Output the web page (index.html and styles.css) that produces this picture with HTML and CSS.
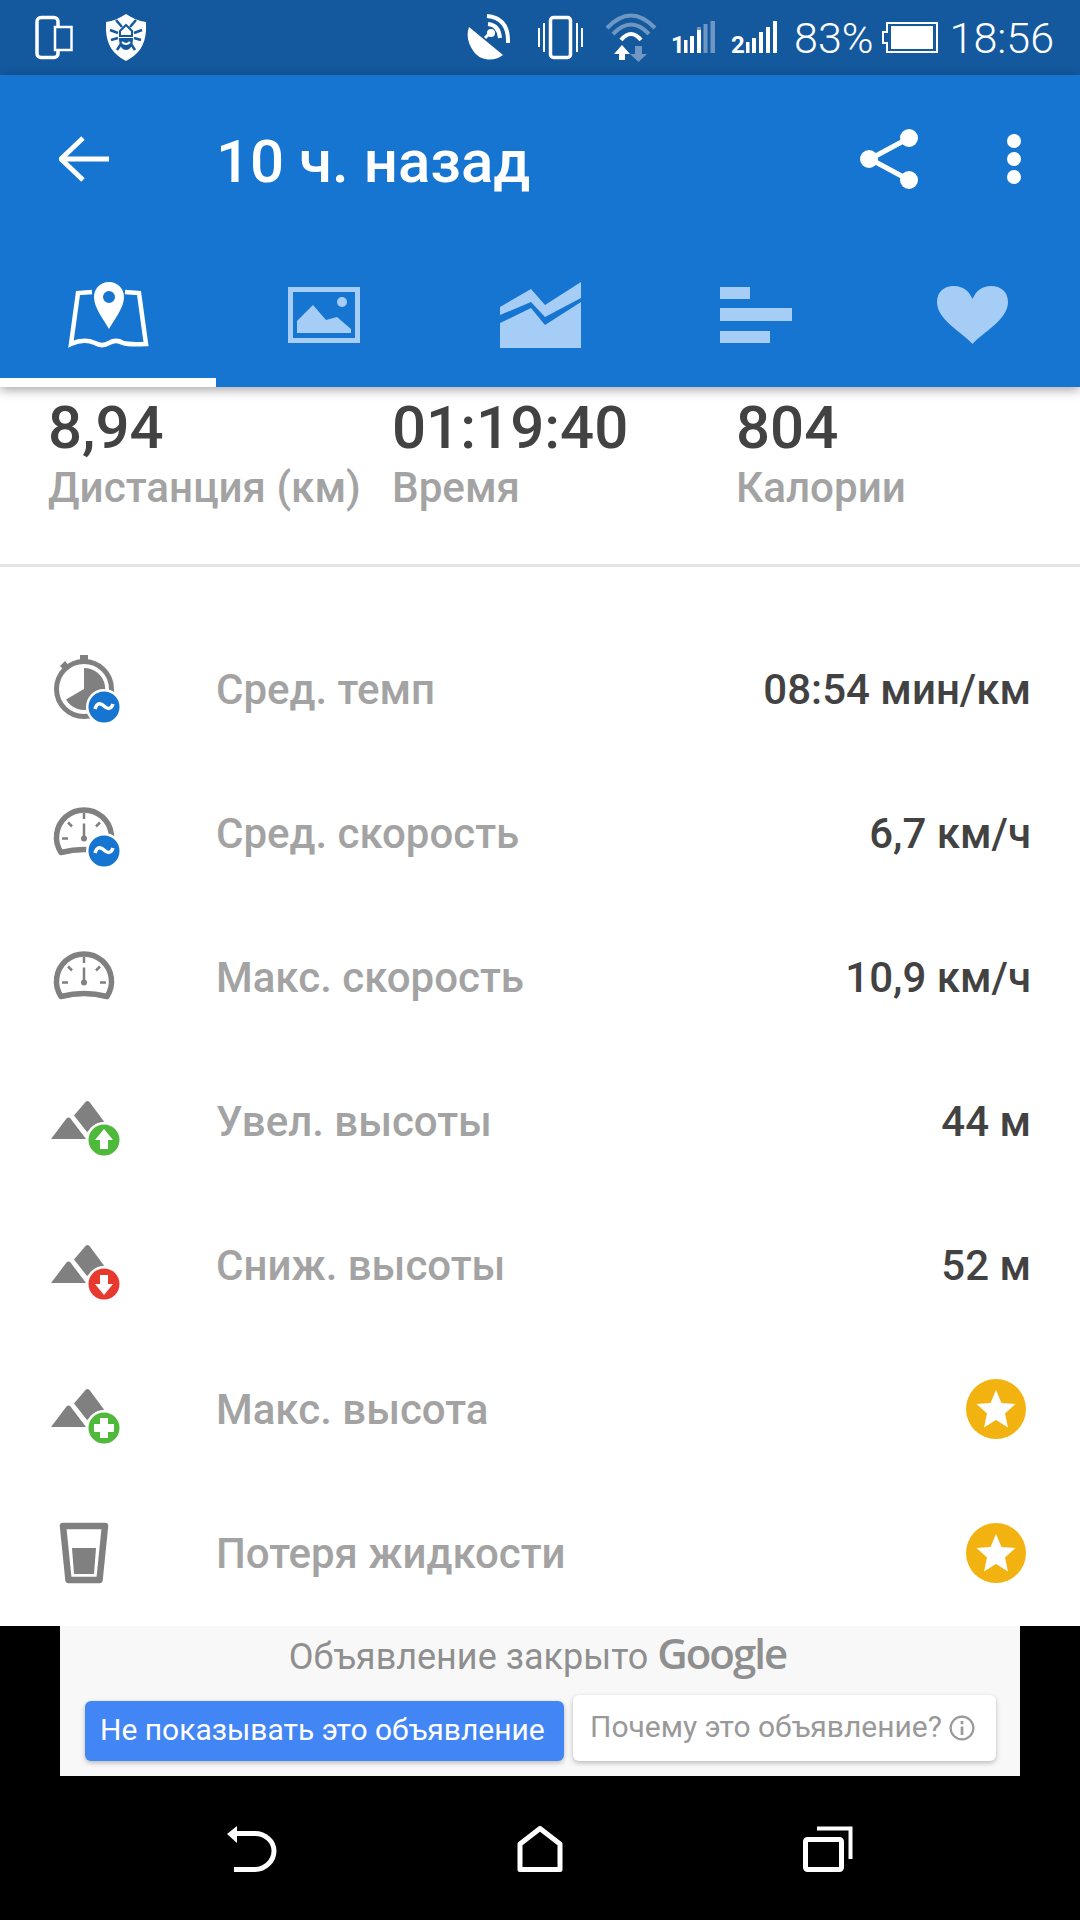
FILE: index.html
```html
<!DOCTYPE html>
<html lang="ru">
<head>
    <meta charset="UTF-8">
    <meta name="viewport" content="width=device-width, initial-scale=1.0">
    <title>10 ч. назад</title>
    <link rel="stylesheet" href="styles.css">
</head>
<body>
    <svg class="defs" aria-hidden="true">
        <symbol id="gauge" viewBox="0 0 80 80">
            <path d="M17 58.5A27.5 27.5 0 1 1 63 58.5Q40 52.5 17 58.5Z" fill="none" stroke="#808081" stroke-width="5.5" stroke-linejoin="round"/>
            <path d="M40 19V25M18 44.5H24M56 44.5H62M24 28.5L28 32.5M56 28.5L52 32.5" stroke="#808081" stroke-width="2.5"/>
            <path d="M40 29.5V44.5" stroke="#808081" stroke-width="2.5"/>
            <circle cx="40" cy="44.5" r="3" fill="#808081"/>
        </symbol>
        <symbol id="peaks" viewBox="0 0 80 80">
            <path d="M7 57L22.5 36.5Q24.5 34.5 26.5 36.5L42 57Z" fill="#808081"/>
            <path d="M30 33.5L41.500 20Q43.500 18 45.500 20L60 39.500L43 50Z" fill="#808081"/>
        </symbol>
    </svg>

    <div class="status-bar">
        <svg class="ic-devices" viewBox="0 0 38 50"><rect x="2" y="4.500" width="21" height="40" rx="4" fill="none" stroke="#fff" stroke-width="3.500"/><rect x="20" y="14" width="16.500" height="23" fill="#14589e" stroke="#fff" stroke-width="2.500"/></svg>
        <svg class="ic-shield" viewBox="0 0 40 50">
            <path d="M20 1C26 5 33 8 40 9C41 28 36 40 20 48C4 40 -1 28 0 9C7 8 14 5 20 1Z" fill="#fff"/>
            <path d="M10 7L16 14M30 7L24 14M4 17L12 20M36 17L28 20M5 27L12 25M35 27L28 25M11 37L15 31M29 37L25 31" stroke="#14589e" stroke-width="2.500" fill="none"/>
            <path d="M20 12L26 18V23H14V18Z" fill="none" stroke="#14589e" stroke-width="2"/>
            <path d="M13 25H27C27 33 24 37 20 37C16 37 13 33 13 25Z" fill="#14589e"/>
            <path d="M16 29Q20 33 24 29" stroke="#fff" stroke-width="2" fill="none"/>
        </svg>
        <span class="status-spacer"></span>
        <svg class="ic-dish" viewBox="0 0 43 50">
            <path d="M2 14L36 42C27 49 14 48 7 39C1 31 -1 22 2 14Z" fill="#fff"/>
            <path d="M18 25L24 19" stroke="#fff" stroke-width="3"/>
            <circle cx="24" cy="20" r="4" fill="#fff"/>
            <path d="M21 11Q32 12 33 25M20 3Q42 5 41 30" fill="none" stroke="#fff" stroke-width="4"/>
        </svg>
        <svg class="ic-vibrate" viewBox="0 0 47 50">
            <rect x="13.500" y="4.500" width="20" height="40" rx="3" fill="none" stroke="#fff" stroke-width="3.500"/>
            <path d="M2 15V34M7 10V39M40 10V39M45 15V34" stroke="#fff" stroke-width="2"/>
        </svg>
        <svg class="ic-wifi" viewBox="0 0 52 50">
            <path d="M2 15Q26 -10 50 15M8 21Q26 2 44 21" fill="none" stroke="#6f97c4" stroke-width="4"/>
            <path d="M16 27Q26 15 36 27" fill="none" stroke="#fff" stroke-width="4"/>
            <path d="M17 32L25 41H20V47H14V41H9Z" fill="#fff"/>
            <path d="M30 33H37V41H42L33.500 49L25 41H30Z" fill="#6f97c4"/>
        </svg>
        <svg class="ic-signal" viewBox="0 0 44 50">
            <text x="0" y="40" class="sim-num">1</text>
            <path d="M13 27H16.500V40H13ZM19 23H23V40H19ZM26 17H30V40H26Z" fill="#fff"/>
            <path d="M26 14H30V17H26ZM32.500 11H36.500V40H32.500ZM39.500 8H44V40H39.500Z" fill="#6f97c4"/>
        </svg>
        <svg class="ic-signal ic-signal2" viewBox="0 0 47 50">
            <text x="0" y="40" class="sim-num">2</text>
            <path d="M15 29H18.500V40H15ZM21 25H25V40H21ZM28 19H32V40H28ZM35 14H39V40H35ZM42 8H46V40H42Z" fill="#fff"/>
        </svg>
        <span class="status-text status-pct">83%</span>
        <svg class="ic-battery" viewBox="0 0 56 50">
            <path d="M5 10H55V39H5V30H1V19H5Z" fill="none" stroke="#fff" stroke-width="2"/>
            <rect x="9" y="13" width="42" height="23" fill="#fff"/>
        </svg>
        <span class="status-text status-time">18:56</span>
    </div>

    <header class="app-bar">
        <div class="toolbar">
            <svg class="ic-back" viewBox="0 0 50 46"><path d="M2 23H50M24 2L2 23L24 44" fill="none" stroke="#fff" stroke-width="5"/></svg>
            <h1 class="title">10 ч. назад</h1>
            <svg class="ic-share" viewBox="0 0 60 60">
                <path d="M49 9L10 30L49 51" fill="none" stroke="#fff" stroke-width="5"/>
                <circle cx="49" cy="9" r="9" fill="#fff"/><circle cx="9" cy="30" r="9" fill="#fff"/><circle cx="49" cy="51" r="9" fill="#fff"/>
            </svg>
            <svg class="ic-more" viewBox="0 0 16 52">
                <circle cx="8" cy="8" r="7" fill="#fff"/><circle cx="8" cy="26" r="7" fill="#fff"/><circle cx="8" cy="44" r="7" fill="#fff"/>
            </svg>
        </div>
        <nav class="tabs">
            <div class="tab tab-active">
                <svg class="ic-map" viewBox="0 0 81 66">
                    <path d="M24 10L10 11L3 62C12 58 20 58 27 61C32 64 36 64 41 61C46 58 50 58 55 61C62 63 70 62 78 62L71 11L57 10" fill="none" stroke="#fff" stroke-width="4.500"/>
                    <path fill-rule="evenodd" d="M41 0C32 0 26 7 26 15C26 26 36 38 41 47C46 38 56 26 56 15C56 7 50 0 41 0ZM41 9A6 6 0 1 1 41 21A6 6 0 1 1 41 9Z" fill="#fff"/>
                </svg>
            </div>
            <div class="tab">
                <svg class="ic-photo" viewBox="0 0 72 56">
                    <rect x="2.500" y="2.500" width="67" height="51" fill="none" stroke="#a5cdf6" stroke-width="5"/>
                    <path d="M9 46V34L25 18L38 33L49 30L63 42V46Z" fill="#a5cdf6"/>
                    <circle cx="54" cy="15" r="5" fill="#a5cdf6"/>
                </svg>
            </div>
            <div class="tab">
                <svg class="ic-chart" viewBox="0 0 81 66">
                    <path d="M0 25L31 7L45 23L81 0V16L45 35L31 20L0 33Z" fill="#a5cdf6"/>
                    <path d="M0 41L31 26L45 43L81 20V66H0Z" fill="#a5cdf6"/>
                </svg>
            </div>
            <div class="tab">
                <svg class="ic-photo" viewBox="0 0 72 56">
                    <path d="M0 0H30V12H0ZM0 21H72V34H0ZM0 44H50V56H0Z" fill="#a5cdf6"/>
                </svg>
            </div>
            <div class="tab">
                <svg class="ic-heart" viewBox="0 0 73 58">
                    <path d="M36.500 58C26 46 1 34 1 16C1 6 8 0 18 0C27 0 33 5 36.500 13C40 5 46 0 55 0C65 0 72 6 72 16C72 34 47 46 36.500 58Z" fill="#a5cdf6"/>
                </svg>
            </div>
        </nav>
    </header>

    <main class="content">
        <section class="stats">
            <div class="stat">
                <div class="stat-value">8,94</div>
                <div class="stat-label">Дистанция (км)</div>
            </div>
            <div class="stat">
                <div class="stat-value">01:19:40</div>
                <div class="stat-label">Время</div>
            </div>
            <div class="stat">
                <div class="stat-value">804</div>
                <div class="stat-label">Калории</div>
            </div>
        </section>

        <section class="details">
            <div class="row">
                <svg class="row-icon" viewBox="0 0 80 80">
                    <circle cx="40" cy="39" r="27.500" fill="none" stroke="#808081" stroke-width="5"/>
                    <path d="M36 5H44V12H36ZM16 16L21 11L26 17L21 21Z" fill="#808081"/>
                    <path d="M40 18V39L22 49.500A21 21 0 1 0 40 18Z" fill="#808081"/>
                    <circle cx="60" cy="57" r="18" fill="#fff"/>
                    <circle cx="60" cy="57" r="15.500" fill="#1675d1"/>
                    <path d="M51 59C53 52 57 53 60 56C63 59 67 60 69 54" fill="none" stroke="#fff" stroke-width="3.500"/>
                </svg>
                <span class="row-label">Сред. темп</span>
                <span class="row-value">08:54 мин/км</span>
            </div>
            <div class="row">
                <svg class="row-icon" viewBox="0 0 80 80">
                    <use href="#gauge"/>
                    <circle cx="60" cy="57" r="18" fill="#fff"/>
                    <circle cx="60" cy="57" r="15.500" fill="#1675d1"/>
                    <path d="M51 59C53 52 57 53 60 56C63 59 67 60 69 54" fill="none" stroke="#fff" stroke-width="3.500"/>
                </svg>
                <span class="row-label">Сред. скорость</span>
                <span class="row-value">6,7 км/ч</span>
            </div>
            <div class="row">
                <svg class="row-icon" viewBox="0 0 80 80"><use href="#gauge"/></svg>
                <span class="row-label">Макс. скорость</span>
                <span class="row-value">10,9 км/ч</span>
            </div>
            <div class="row">
                <svg class="row-icon" viewBox="0 0 80 80">
                    <use href="#peaks"/>
                    <circle cx="60" cy="58" r="18" fill="#fff"/>
                    <circle cx="60" cy="58" r="15.500" fill="#4fb93b"/>
                    <path d="M60 47L69 58H64V67H56V58H51Z" fill="#fff"/>
                </svg>
                <span class="row-label">Увел. высоты</span>
                <span class="row-value">44 м</span>
            </div>
            <div class="row">
                <svg class="row-icon" viewBox="0 0 80 80">
                    <use href="#peaks"/>
                    <circle cx="60" cy="58" r="18" fill="#fff"/>
                    <circle cx="60" cy="58" r="15.500" fill="#e8392f"/>
                    <path d="M60 69L69 58H64V49H56V58H51Z" fill="#fff"/>
                </svg>
                <span class="row-label">Сниж. высоты</span>
                <span class="row-value">52 м</span>
            </div>
            <div class="row">
                <svg class="row-icon" viewBox="0 0 80 80">
                    <use href="#peaks"/>
                    <circle cx="60" cy="58" r="18" fill="#fff"/>
                    <circle cx="60" cy="58" r="15.500" fill="#4fb93b"/>
                    <path d="M56 48H64V54H70V62H64V68H56V62H50V54H56Z" fill="#fff"/>
                </svg>
                <span class="row-label">Макс. высота</span>
                <svg class="star" viewBox="0 0 60 60">
                    <circle cx="30" cy="30" r="30" fill="#f2b311"/>
                    <path d="M30 11L35.500 24L49.500 25L39 34.500L42 48.500L30 41L18 48.500L21 34.500L10.500 25L24.500 24Z" fill="#fff"/>
                </svg>
            </div>
            <div class="row">
                <svg class="row-icon" viewBox="0 0 80 80">
                    <path d="M19 12H61L55.500 66H24.500Z" fill="none" stroke="#808081" stroke-width="6.500" stroke-linejoin="round"/>
                    <path d="M28 34H52L50 60H30Z" fill="#808081"/>
                </svg>
                <span class="row-label">Потеря жидкости</span>
                <svg class="star" viewBox="0 0 60 60">
                    <circle cx="30" cy="30" r="30" fill="#f2b311"/>
                    <path d="M30 11L35.500 24L49.500 25L39 34.500L42 48.500L30 41L18 48.500L21 34.500L10.500 25L24.500 24Z" fill="#fff"/>
                </svg>
            </div>
        </section>
    </main>

    <aside class="ad-wrap">
        <div class="ad">
            <div class="ad-title">Объявление закрыто <span class="ad-google">Google</span></div>
            <div class="ad-buttons">
                <div class="ad-btn ad-btn-blue"><span class="ad-btn-text">Не показывать это объявление</span></div>
                <div class="ad-btn ad-btn-white"><span class="ad-btn-text">Почему это объявление?</span>
                    <svg class="ic-info" viewBox="0 0 24 24">
                        <circle cx="12" cy="12" r="10.500" fill="none" stroke="#999" stroke-width="2"/>
                        <path d="M12 5.500V8.500M12 10.500V18.500" stroke="#999" stroke-width="2.500"/>
                    </svg>
                </div>
            </div>
        </div>
    </aside>

    <footer class="nav-bar">
        <svg class="nav-icon" viewBox="0 0 50 46">
            <path d="M7 43.500H28C38 43.500 47 35 47 25C47 15 38 7.500 28 7.500H10" fill="none" stroke="#fff" stroke-width="5"/>
            <path d="M0 8L10 0V17Z" fill="#fff"/>
        </svg>
        <svg class="nav-icon" viewBox="0 0 50 46">
            <path d="M5 43.500V18L25 2.500L45 18V43.500Z" fill="none" stroke="#fff" stroke-width="5" stroke-linejoin="round"/>
        </svg>
        <svg class="nav-icon" viewBox="0 0 50 46">
            <rect x="2.500" y="13.500" width="36" height="30" rx="2" fill="none" stroke="#fff" stroke-width="5"/>
            <path d="M14 2.500H47.500V33" fill="none" stroke="#fff" stroke-width="4"/>
        </svg>
    </footer>
</body>
</html>
```

FILE: styles.css
```css
* {
    box-sizing: border-box;
}

body {
    margin: 0;
    width: 1080px;
    height: 1920px;
    overflow: hidden;
    display: flex;
    flex-direction: column;
    background: #000;
    font-family: Roboto, "Noto Sans", sans-serif;
}

.defs {
    width: 0;
    height: 0;
    display: none;
}

/* status bar */
.status-bar {
    height: 75px;
    flex-shrink: 0;
    display: flex;
    align-items: center;
    padding: 0 26px 0 35px;
    background: #14589e;
    color: #fff;
}

.status-bar svg {
    height: 50px;
    flex-shrink: 0;
}

.ic-devices { width: 38px; }
.ic-shield { width: 40px; margin-left: 33px; }
.status-spacer { flex: 1; }
.ic-dish { width: 43px; }
.ic-vibrate { width: 47px; margin-left: 27px; }
.ic-wifi { width: 52px; margin-left: 21px; }
.ic-signal { width: 44px; margin-left: 14px; }
.ic-signal2 { width: 47px; margin-left: 16px; }
.ic-battery { width: 56px; margin-left: 8px; }

.sim-num {
    font-size: 24px;
    font-weight: 700;
    fill: #fff;
}

.status-text {
    font-size: 43px;
    font-weight: 300;
    line-height: 50px;
}

.status-pct { margin-left: 16px; }
.status-time { margin-left: 12px; }

/* app bar */
.app-bar {
    height: 312px;
    flex-shrink: 0;
    background: #1675d1;
    box-shadow: 0 3px 10px rgba(0, 0, 0, 0.35);
    position: relative;
    z-index: 2;
    display: flex;
    flex-direction: column;
}

.toolbar {
    height: 168px;
    display: flex;
    align-items: center;
    padding: 0 58px 0 59px;
}

.ic-back {
    width: 50px;
    height: 46px;
}

.title {
    flex: 1;
    margin: 0 0 0 107px;
    padding-top: 5px;
    color: #fff;
    font-size: 60px;
    font-weight: 500;
    line-height: 70px;
}

.ic-share {
    width: 60px;
    height: 60px;
}

.ic-more {
    width: 16px;
    height: 52px;
    margin-left: 86px;
}

.tabs {
    flex: 1;
    display: flex;
}

.tab {
    width: 216px;
    display: flex;
    justify-content: center;
    align-items: center;
    padding-top: 9px;
    border-bottom: 9px solid transparent;
}

.tab-active {
    border-bottom-color: #fff;
}

.ic-map, .ic-chart {
    width: 81px;
    height: 66px;
}

.ic-photo {
    width: 72px;
    height: 56px;
}

.ic-heart {
    width: 73px;
    height: 58px;
}

/* content */
.content {
    height: 1239px;
    flex-shrink: 0;
    background: #fff;
    overflow: hidden;
}

.stats {
    height: 180px;
    display: flex;
    padding-left: 48px;
    border-bottom: 3px solid #e4e4e4;
}

.stat {
    width: 344px;
}

.stat-value {
    margin-top: 6px;
    font-size: 60px;
    font-weight: 500;
    line-height: 70px;
    color: #424242;
}

.stat-label {
    font-size: 42.2px;
    font-weight: 500;
    line-height: 50px;
    color: #a3a3a3;
}

.details {
    height: 1059px;
    padding-top: 51px;
    display: flex;
    flex-direction: column;
}

.row {
    flex: 1;
    display: flex;
    align-items: center;
    padding: 0 49px 0 44px;
}

.row-icon {
    width: 80px;
    height: 80px;
    flex-shrink: 0;
}

.row-label {
    flex: 1;
    margin-left: 92px;
    padding-bottom: 2px;
    font-size: 42px;
    font-weight: 500;
    color: #a3a3a3;
}

.row-value {
    padding-bottom: 2px;
    font-size: 42px;
    font-weight: 500;
    color: #424242;
}

.star {
    width: 60px;
    height: 60px;
    margin: 0 5px 2px 0;
}

/* ad */
.ad-wrap {
    height: 150px;
    flex-shrink: 0;
    padding: 0 60px;
    background: #000;
}

.ad {
    height: 100%;
    padding: 0 24px 15px 25px;
    display: flex;
    flex-direction: column;
    justify-content: space-between;
    background: #f8f8f8;
}

.ad-title {
    padding: 7px 6px 0 0;
    text-align: center;
    font-size: 36px;
    line-height: 40px;
    color: #8f8f8f;
}

.ad-google {
    font-family: "Open Sans", sans-serif;
    font-size: 42px;
    font-weight: 600;
    letter-spacing: -2px;
}

.ad-buttons {
    display: flex;
    align-items: flex-end;
    justify-content: space-between;
}

.ad-btn {
    display: flex;
    align-items: center;
    border-radius: 6px;
    font-size: 30px;
    box-shadow: 0 2px 5px rgba(0, 0, 0, 0.25);
}

.ad-btn-text {
    padding-bottom: 4px;
}

.ad-btn-blue {
    width: 479px;
    height: 60px;
    padding-left: 15px;
    background: #4285f4;
    color: #fff;
}

.ad-btn-white {
    width: 423px;
    height: 66px;
    padding-left: 17px;
    gap: 7px;
    background: #fff;
    color: #999;
}

.ic-info {
    width: 26px;
    height: 26px;
}

/* nav bar */
.nav-bar {
    flex: 1;
    display: flex;
    justify-content: center;
    align-items: center;
    gap: 238px;
    padding-top: 1px;
    background: #000;
}

.nav-icon {
    width: 50px;
    height: 46px;
}
```
